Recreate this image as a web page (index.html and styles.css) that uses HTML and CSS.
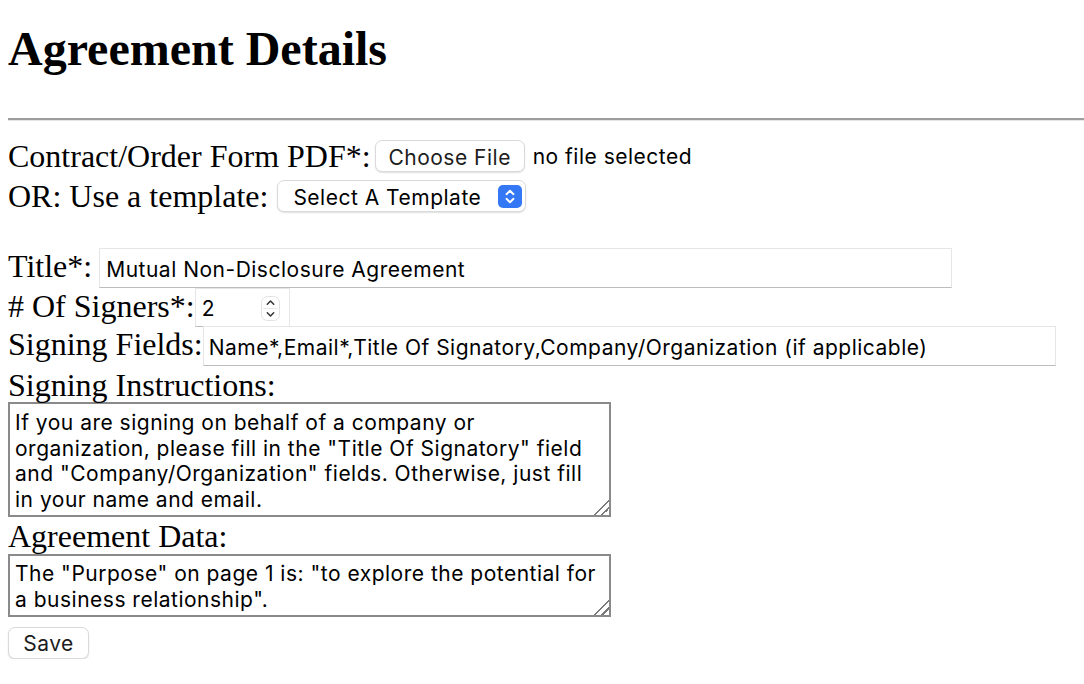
FILE: index.html
```html
<!DOCTYPE html>
<html lang="en">
<head>
  <meta charset="UTF-8" />
  <meta name="viewport" content="width=device-width, initial-scale=1.0" />
  <title>Agreement Details</title>
  <link rel="stylesheet" href="styles.css">
</head>
<body>
  <h1>Agreement Details</h1>
  <hr>

  <form class="agreement">
    <div class="row row-top">
      <label for="pdf">Contract/Order Form PDF*:</label>
      <span class="file-btn">Choose File</span>
      <span class="file-name">no file selected</span>
    </div>
    <div class="row row-top second">
      <label for="template">OR: Use a template:</label>
      <div class="select" id="template">
        <span>Select A Template</span>
        <span class="select-arrow">
          <svg width="24" height="23" viewBox="0 0 24 23">
            <rect width="24" height="23" rx="5" fill="#3478f6"/>
            <path d="M8.5 9.2 L12 5.8 L15.5 9.2 M8.5 13.8 L12 17.2 L15.5 13.8" fill="none" stroke="#fff" stroke-width="1.9" stroke-linecap="round" stroke-linejoin="round"/>
          </svg>
        </span>
      </div>
    </div>

    <div class="row row-field title-row">
      <label for="title">Title*:</label>
      <input type="text" id="title" class="text-input title-input" value="Mutual Non-Disclosure Agreement">
    </div>
    <div class="row row-field signers-row">
      <label for="signers">#&nbsp;Of Signers*:</label>
      <div class="number-input" id="signers">
        <span>2</span>
        <span class="spinner">
          <svg width="19" height="25" viewBox="0 0 19 25">
            <rect x="0.5" y="0.5" width="18" height="24" rx="6" fill="#fff" stroke="#e2e2e2"/>
            <line x1="2" y1="12.5" x2="17" y2="12.5" stroke="#e8e8e8"/>
            <path d="M6.3 8.2 L9.5 5 L12.7 8.2 M6.3 16.8 L9.5 20 L12.7 16.8" fill="none" stroke="#333" stroke-width="1.5" stroke-linecap="round" stroke-linejoin="round"/>
          </svg>
        </span>
      </div>
    </div>
    <div class="row row-field fields-row">
      <label for="fields">Signing Fields:</label>
      <input type="text" id="fields" class="text-input fields-input" value="Name*,Email*,Title Of Signatory,Company/Organization (if applicable)">
    </div>

    <label class="block-label" for="instructions">Signing Instructions:</label>
    <textarea id="instructions" class="area area-tall">If you are signing on behalf of a company or organization, please fill in the "Title Of Signatory" field and "Company/Organization" fields. Otherwise, just fill in your name and email.</textarea>

    <label class="block-label" for="data">Agreement Data:</label>
    <textarea id="data" class="area area-short">The "Purpose" on page 1 is: "to explore the potential for a business relationship".</textarea>

    <button type="button" class="save-btn">Save</button>
  </form>
</body>
</html>
```

FILE: styles.css
```css
body {
  font-family: "Liberation Serif", "Times New Roman", serif;
  color: #000000;
  background-color: #ffffff;
  margin: 0;
  padding: 0 8px;
}
h1 {
  font-size: 48px;
  line-height: 53px;
  margin: 22px 0 0 0;
}
hr {
  border: 0;
  border-top: 2px solid #9d9d9d;
  border-bottom: 1px solid #e6e6e6;
  height: 0;
  margin: 43px -8px 19px 0;
}
.agreement {
  font-size: 32px;
}
.row {
  display: flex;
  align-items: flex-start;
  white-space: nowrap;
}
.row-top label {
  line-height: 32px;
}
.row-field label {
  line-height: 36px;
}
.row-top {
  height: 32px;
}
.second {
  margin-top: 8px;
  margin-bottom: 36px;
}
.title-row {
  height: 40px;
}
.signers-row {
  height: 38px;
}
.fields-row {
  height: 40px;
}

/* controls */
.file-btn, .select, .text-input, .number-input, .area, .save-btn, .file-name {
  font-family: Inter, "Liberation Sans", Arial, sans-serif;
  font-size: 21px;
  letter-spacing: 0.5px;
  color: #1d1d1d;
}
.file-btn, .select, .save-btn {
  box-sizing: border-box;
  height: 32px;
  background: #ffffff;
  border: 1px solid #dadada;
  border-radius: 7px;
  box-shadow: 0 1px 1.5px rgba(0, 0, 0, 0.12);
  display: inline-flex;
  align-items: center;
  padding-top: 2px;
}
.file-btn {
  width: 150px;
  margin-left: 4px;
  justify-content: center;
}
.file-name {
  margin-left: 8px;
  line-height: 34px;
  color: #000000;
}
.select {
  width: 249px;
  margin-left: 9px;
  padding: 0 3px 0 15px;
  justify-content: space-between;
  color: #000000;
}
.select > span:first-child {
  padding-top: 2px;
}
.select-arrow {
  display: flex;
}
.text-input {
  box-sizing: border-box;
  height: 40px;
  border: 1px solid #e6e6e6;
  border-bottom-color: #bdbdbd;
  padding: 2px 6px 0 6px;
  color: #000000;
  outline: none;
}
.title-input {
  width: 853px;
  margin-left: 7px;
}
.fields-input {
  width: 853px;
  margin-left: 0;
  padding: 2px 5px 0 5px;
}
.number-input {
  box-sizing: border-box;
  width: 95px;
  height: 39px;
  border: 1px solid #e6e6e6;
  border-bottom-color: #bdbdbd;
  display: inline-flex;
  align-items: center;
  justify-content: space-between;
  padding: 2px 9px 0 6px;
  color: #000000;
}
.spinner {
  display: flex;
}
.block-label {
  display: block;
  height: 36px;
  line-height: 38px;
}
.area {
  display: block;
  box-sizing: border-box;
  width: 603px;
  margin: 0;
  border: 2px solid #8a8a8a;
  padding: 6px 2px 0 5px;
  line-height: 25.7px;
  color: #000000;
  resize: both;
  outline: none;
}
.area::-webkit-resizer {
  background: linear-gradient(135deg, transparent 48%, #7a7a7a 48%, #7a7a7a 56%, transparent 56%, transparent 72%, #7a7a7a 72%, #7a7a7a 80%, transparent 80%);
}
.area-tall {
  height: 115px;
}
.area-short {
  height: 63px;
  margin-top: 1px;
  padding-top: 5px;
}
.save-btn {
  width: 81px;
  margin-top: 10px;
  justify-content: center;
  cursor: pointer;
}
```
